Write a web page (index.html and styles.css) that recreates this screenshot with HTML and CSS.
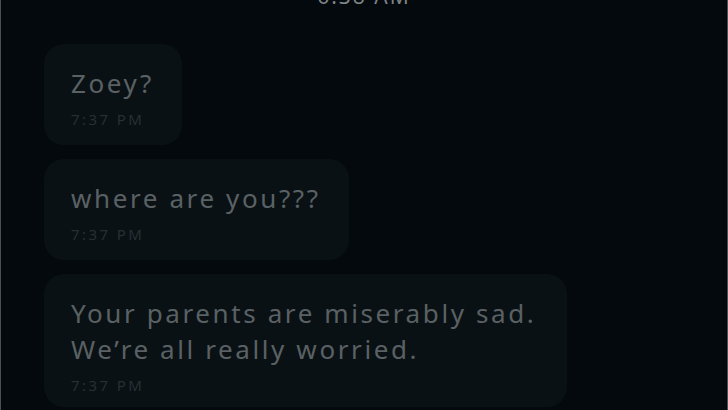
FILE: index.html
```html
<!DOCTYPE html>
<html lang="en">
<head>
    <meta charset="UTF-8">
    <title>Messages</title>
    <link rel="stylesheet" href="styles.css">
</head>
<body>
<div class="screen">
    <div class="day">6:38 AM</div>
    <div class="thread">
        <div class="msg">
            <p class="text">Zoey?</p>
            <span class="time">7:37 PM</span>
        </div>
        <div class="msg">
            <p class="text">where are you???</p>
            <span class="time">7:37 PM</span>
        </div>
        <div class="msg wide">
            <p class="text">Your parents are miserably sad.<br>We’re all really worried.</p>
            <span class="time">7:37 PM</span>
        </div>
    </div>
</div>
</body>
</html>
```

FILE: styles.css
```css
* {
    margin: 0;
    padding: 0;
}

body {
    background-color: #03090c;
    font-family: "Noto Sans", "Open Sans", sans-serif;
    overflow: hidden;
}
.screen {
    width: 726px;
    height: 410px;
    border-left: 1px solid #4a5052;
    border-right: 1px solid #4a5052;
    overflow: hidden;
}
.day {
    margin-top: -16px;
    height: 24px;
    line-height: 24px;
    text-align: center;
    font-size: 21px;
    letter-spacing: 2px;
    color: #7d8486;
}
.thread {
    display: flex;
    flex-direction: column;
    align-items: flex-start;
    gap: 14px;
    padding-top: 36px;
    padding-left: 43px;
}
.msg {
    background-color: #0a1114;
    border-radius: 20px;
    padding: 21px 28px 16px 27px;
}
.msg.wide {
    width: 523px;
    box-sizing: border-box;
    padding-bottom: 12px;
}
.text {
    font-size: 26px;
    line-height: 36px;
    letter-spacing: 2.6px;
    color: #5a6164;
}
.time {
    display: block;
    margin-top: 8px;
    font-size: 15px;
    line-height: 20px;
    letter-spacing: 2.4px;
    color: #272f32;
}
```
